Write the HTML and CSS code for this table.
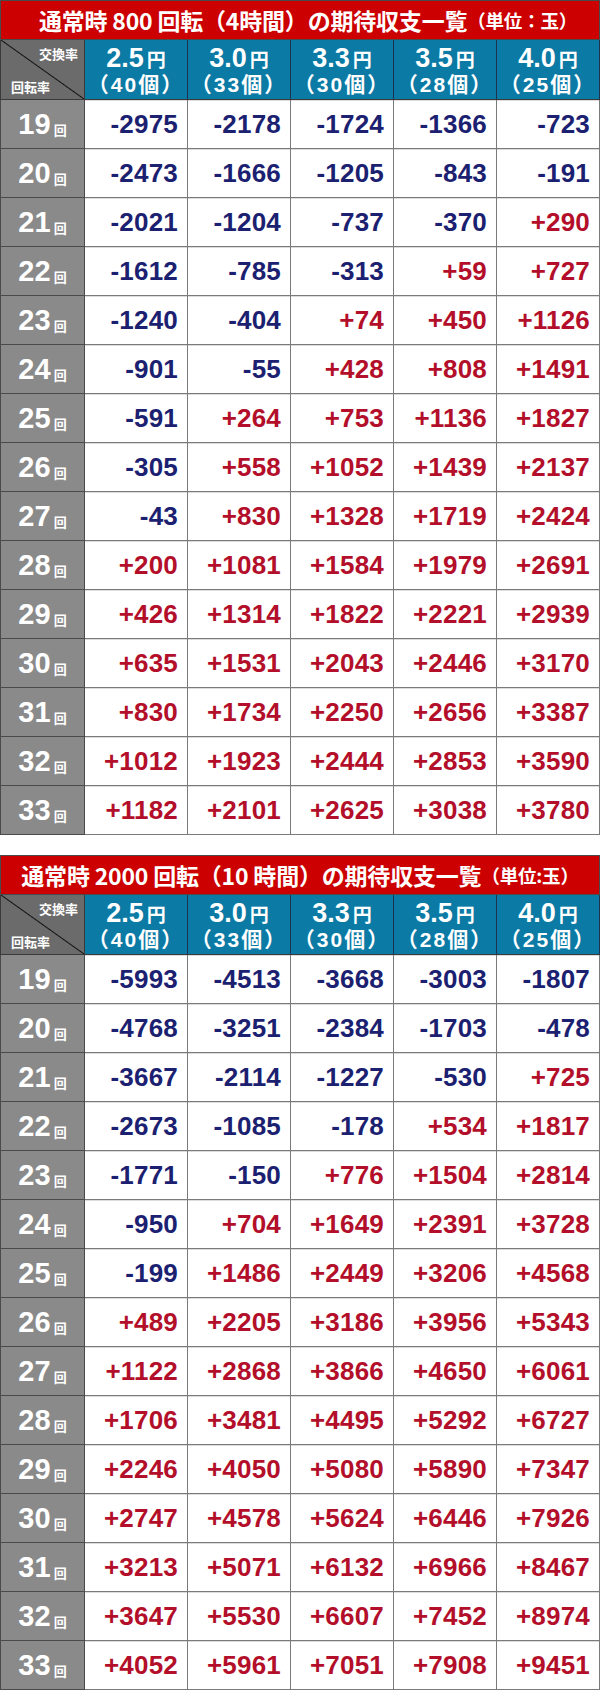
FILE: index.html
```html
<!DOCTYPE html>
<html lang="ja">
<head>
<meta charset="utf-8">
<title>期待収支一覧</title>
<link rel="stylesheet" href="styles.css">
</head>
<body>
<section class="block">
  <div class="title title-first">通常時 800 回転（4時間）の期待収支一覧<span class="unit">（単位：玉）</span></div>
  <div class="grid">
    <div class="corner"><span class="c-top">交換率</span><span class="c-bot">回転率</span></div>
    <div class="hd"><div class="rate">2.5<small>円</small></div><div class="cnt">（40個）</div></div>
    <div class="hd"><div class="rate">3.0<small>円</small></div><div class="cnt">（33個）</div></div>
    <div class="hd"><div class="rate">3.3<small>円</small></div><div class="cnt">（30個）</div></div>
    <div class="hd"><div class="rate">3.5<small>円</small></div><div class="cnt">（28個）</div></div>
    <div class="hd"><div class="rate">4.0<small>円</small></div><div class="cnt">（25個）</div></div>

    <div class="lb">19<span>回</span></div><div class="c n">-2975</div><div class="c n">-2178</div><div class="c n">-1724</div><div class="c n">-1366</div><div class="c n">-723</div>
    <div class="lb">20<span>回</span></div><div class="c n">-2473</div><div class="c n">-1666</div><div class="c n">-1205</div><div class="c n">-843</div><div class="c n">-191</div>
    <div class="lb">21<span>回</span></div><div class="c n">-2021</div><div class="c n">-1204</div><div class="c n">-737</div><div class="c n">-370</div><div class="c p">+290</div>
    <div class="lb">22<span>回</span></div><div class="c n">-1612</div><div class="c n">-785</div><div class="c n">-313</div><div class="c p">+59</div><div class="c p">+727</div>
    <div class="lb">23<span>回</span></div><div class="c n">-1240</div><div class="c n">-404</div><div class="c p">+74</div><div class="c p">+450</div><div class="c p">+1126</div>
    <div class="lb">24<span>回</span></div><div class="c n">-901</div><div class="c n">-55</div><div class="c p">+428</div><div class="c p">+808</div><div class="c p">+1491</div>
    <div class="lb">25<span>回</span></div><div class="c n">-591</div><div class="c p">+264</div><div class="c p">+753</div><div class="c p">+1136</div><div class="c p">+1827</div>
    <div class="lb">26<span>回</span></div><div class="c n">-305</div><div class="c p">+558</div><div class="c p">+1052</div><div class="c p">+1439</div><div class="c p">+2137</div>
    <div class="lb">27<span>回</span></div><div class="c n">-43</div><div class="c p">+830</div><div class="c p">+1328</div><div class="c p">+1719</div><div class="c p">+2424</div>
    <div class="lb">28<span>回</span></div><div class="c p">+200</div><div class="c p">+1081</div><div class="c p">+1584</div><div class="c p">+1979</div><div class="c p">+2691</div>
    <div class="lb">29<span>回</span></div><div class="c p">+426</div><div class="c p">+1314</div><div class="c p">+1822</div><div class="c p">+2221</div><div class="c p">+2939</div>
    <div class="lb">30<span>回</span></div><div class="c p">+635</div><div class="c p">+1531</div><div class="c p">+2043</div><div class="c p">+2446</div><div class="c p">+3170</div>
    <div class="lb">31<span>回</span></div><div class="c p">+830</div><div class="c p">+1734</div><div class="c p">+2250</div><div class="c p">+2656</div><div class="c p">+3387</div>
    <div class="lb">32<span>回</span></div><div class="c p">+1012</div><div class="c p">+1923</div><div class="c p">+2444</div><div class="c p">+2853</div><div class="c p">+3590</div>
    <div class="lb">33<span>回</span></div><div class="c p">+1182</div><div class="c p">+2101</div><div class="c p">+2625</div><div class="c p">+3038</div><div class="c p">+3780</div>
  </div>
</section>

<section class="block">
  <div class="title">通常時 2000 回転（10 時間）の期待収支一覧<span class="unit">（単位:玉）</span></div>
  <div class="grid">
    <div class="corner"><span class="c-top">交換率</span><span class="c-bot">回転率</span></div>
    <div class="hd"><div class="rate">2.5<small>円</small></div><div class="cnt">（40個）</div></div>
    <div class="hd"><div class="rate">3.0<small>円</small></div><div class="cnt">（33個）</div></div>
    <div class="hd"><div class="rate">3.3<small>円</small></div><div class="cnt">（30個）</div></div>
    <div class="hd"><div class="rate">3.5<small>円</small></div><div class="cnt">（28個）</div></div>
    <div class="hd"><div class="rate">4.0<small>円</small></div><div class="cnt">（25個）</div></div>

    <div class="lb">19<span>回</span></div><div class="c n">-5993</div><div class="c n">-4513</div><div class="c n">-3668</div><div class="c n">-3003</div><div class="c n">-1807</div>
    <div class="lb">20<span>回</span></div><div class="c n">-4768</div><div class="c n">-3251</div><div class="c n">-2384</div><div class="c n">-1703</div><div class="c n">-478</div>
    <div class="lb">21<span>回</span></div><div class="c n">-3667</div><div class="c n">-2114</div><div class="c n">-1227</div><div class="c n">-530</div><div class="c p">+725</div>
    <div class="lb">22<span>回</span></div><div class="c n">-2673</div><div class="c n">-1085</div><div class="c n">-178</div><div class="c p">+534</div><div class="c p">+1817</div>
    <div class="lb">23<span>回</span></div><div class="c n">-1771</div><div class="c n">-150</div><div class="c p">+776</div><div class="c p">+1504</div><div class="c p">+2814</div>
    <div class="lb">24<span>回</span></div><div class="c n">-950</div><div class="c p">+704</div><div class="c p">+1649</div><div class="c p">+2391</div><div class="c p">+3728</div>
    <div class="lb">25<span>回</span></div><div class="c n">-199</div><div class="c p">+1486</div><div class="c p">+2449</div><div class="c p">+3206</div><div class="c p">+4568</div>
    <div class="lb">26<span>回</span></div><div class="c p">+489</div><div class="c p">+2205</div><div class="c p">+3186</div><div class="c p">+3956</div><div class="c p">+5343</div>
    <div class="lb">27<span>回</span></div><div class="c p">+1122</div><div class="c p">+2868</div><div class="c p">+3866</div><div class="c p">+4650</div><div class="c p">+6061</div>
    <div class="lb">28<span>回</span></div><div class="c p">+1706</div><div class="c p">+3481</div><div class="c p">+4495</div><div class="c p">+5292</div><div class="c p">+6727</div>
    <div class="lb">29<span>回</span></div><div class="c p">+2246</div><div class="c p">+4050</div><div class="c p">+5080</div><div class="c p">+5890</div><div class="c p">+7347</div>
    <div class="lb">30<span>回</span></div><div class="c p">+2747</div><div class="c p">+4578</div><div class="c p">+5624</div><div class="c p">+6446</div><div class="c p">+7926</div>
    <div class="lb">31<span>回</span></div><div class="c p">+3213</div><div class="c p">+5071</div><div class="c p">+6132</div><div class="c p">+6966</div><div class="c p">+8467</div>
    <div class="lb">32<span>回</span></div><div class="c p">+3647</div><div class="c p">+5530</div><div class="c p">+6607</div><div class="c p">+7452</div><div class="c p">+8974</div>
    <div class="lb">33<span>回</span></div><div class="c p">+4052</div><div class="c p">+5961</div><div class="c p">+7051</div><div class="c p">+7908</div><div class="c p">+9451</div>
  </div>
</section>
</body>
</html>
```

FILE: styles.css
```css
* {
  box-sizing: border-box;
  margin: 0;
  padding: 0;
}

body {
  margin: 0;
  width: 600px;
  background: #ffffff;
  font-family: "Liberation Sans", Arial, "Noto Sans CJK JP", sans-serif;
}

.block {
  width: 600px;
}

.block + .block {
  margin-top: 20px;
}

.title {
  height: 40px;
  background: #cc0000;
  border: 1px solid #4a4a4a;
  color: #ffffff;
  font-family: "Noto Sans CJK JP", sans-serif;
  font-weight: 700;
  font-size: 23px;
  display: flex;
  align-items: center;
  justify-content: center;
  white-space: nowrap;
  letter-spacing: -0.2px;
}

.title-first {
  padding-left: 16px;
}

.title .unit {
  font-size: 18.5px;
}

.grid {
  display: grid;
  grid-template-columns: 85px repeat(5, 103px);
  grid-auto-rows: 49px;
  grid-template-rows: 60px;
}

.corner {
  border-left: 1px solid #3a3a3a;
  border-right: 1px solid #3a3a3a;
  border-bottom: 1px solid #3a3a3a;
  background: linear-gradient(to top right, #6b6b6b calc(50% - 1px), #111111 50%, #6b6b6b calc(50% + 1px));
  display: flex;
  flex-direction: column;
  justify-content: space-between;
  padding: 5px 6px 3px 10px;
  color: #ffffff;
  font-family: "Noto Sans CJK JP", sans-serif;
  font-weight: 700;
  font-size: 13px;
  line-height: 18px;
}

.c-top {
  align-self: flex-end;
}

.c-bot {
  align-self: flex-start;
}

.hd {
  background: #0b7aa5;
  border-right: 1px solid #1e3350;
  border-bottom: 1px solid #3a3a3a;
  color: #ffffff;
  display: flex;
  flex-direction: column;
  align-items: center;
  justify-content: center;
  padding-top: 1px;
}

.rate {
  font-family: "Liberation Sans", Arial, sans-serif;
  font-weight: 700;
  font-size: 27px;
  line-height: 28px;
  white-space: nowrap;
}

.rate small {
  font-family: "Noto Sans CJK JP", sans-serif;
  font-size: 19px;
  margin-left: 3px;
}

.cnt {
  font-family: "Liberation Sans", Arial, "Noto Sans CJK JP", sans-serif;
  font-weight: 700;
  font-size: 21px;
  line-height: 24px;
  letter-spacing: 2px;
  white-space: nowrap;
}

.lb {
  background: #8a8a8a;
  border-left: 1px solid #4a4a4a;
  border-right: 1px solid #4a4a4a;
  border-bottom: 1px solid #4a4a4a;
  color: #ffffff;
  font-family: "Liberation Sans", Arial, sans-serif;
  font-weight: 700;
  font-size: 29px;
  display: flex;
  align-items: center;
  justify-content: center;
  padding-top: 1px;
}

.lb span {
  font-family: "Noto Sans CJK JP", sans-serif;
  font-size: 13px;
  margin-left: 3px;
  margin-top: 10px;
}

.c {
  background: #ffffff;
  border-right: 1px solid #7a7a7a;
  border-bottom: 1px solid #7a7a7a;
  box-shadow: inset 0 1px 0 #dcdcdc;
  display: flex;
  align-items: center;
  justify-content: flex-end;
  padding-right: 9px;
  font-family: "Liberation Sans", Arial, sans-serif;
  font-weight: 700;
  font-size: 26px;
  letter-spacing: 0.2px;
}

.n {
  color: #1b2170;
}

.p {
  color: #b30f2a;
}
```
